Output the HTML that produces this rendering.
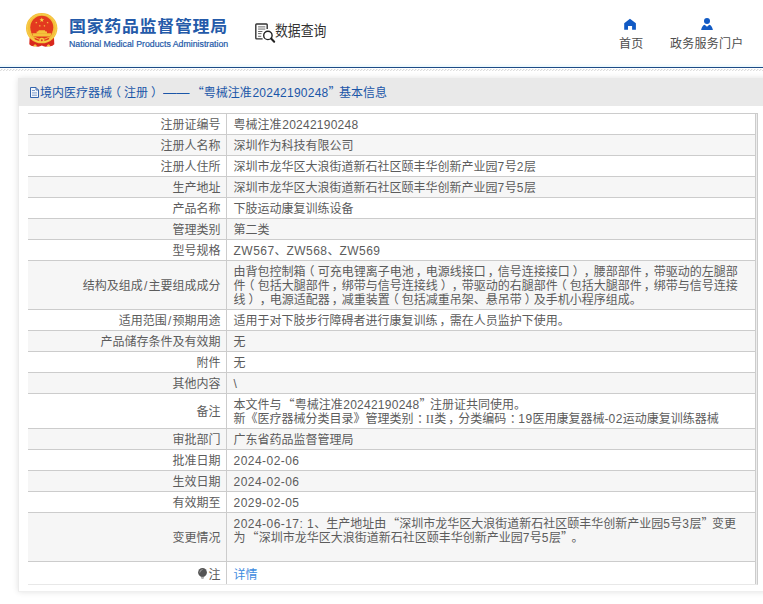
<!DOCTYPE html>
<html lang="zh-CN">
<head>
<meta charset="utf-8">
<title>国家药品监督管理局 数据查询</title>
<style>
html,body{margin:0;padding:0;}
body{width:763px;height:604px;overflow:hidden;background:#fff;position:relative;
  font-family:"Liberation Sans","Noto Sans CJK SC",sans-serif;font-size:12px;color:#555;text-spacing-trim:space-all;}
.abs{position:absolute;}
#hdr{position:absolute;left:0;top:0;width:763px;height:72px;background:#fff;}
#logo{position:absolute;left:24px;top:11px;width:36px;height:38px;}
#t1{position:absolute;left:69px;top:13px;font-size:16.3px;line-height:26px;font-weight:bold;color:#245aa9;white-space:nowrap;letter-spacing:0.69px;transform-origin:0 0;transform:scaleX(1.04);}
#t2{position:absolute;left:69px;top:38px;font-size:8.3px;line-height:12px;color:#245aa9;white-space:nowrap;transform-origin:0 0;transform:scaleX(1.056);-webkit-text-stroke:0.2px #245aa9;}
#sj{position:absolute;left:275px;top:21.5px;font-size:14.3px;line-height:18px;color:#333;white-space:nowrap;transform-origin:0 0;transform:scaleX(0.9);}
#sjico{position:absolute;left:254px;top:22px;width:22px;height:22px;}
.nav{position:absolute;top:37px;font-size:12px;line-height:14px;color:#4d4d4d;white-space:nowrap;letter-spacing:0.25px;}
#line1{position:absolute;left:0;top:64px;width:763px;height:3px;background:linear-gradient(to bottom,#fdfeff,#e9f8fd);}
#line2{position:absolute;left:0;top:67px;width:763px;height:1px;background:#1e4b86;}
#hatch{position:absolute;left:0;top:69px;width:763px;height:1px;
  background:repeating-linear-gradient(90deg,#fff 0,#fff 1px,#dadada 1px,#dadada 2px,#f0f0f0 2px,#f0f0f0 3px);}
#hatch2{position:absolute;left:0;top:70px;width:763px;height:1px;
  background:repeating-linear-gradient(90deg,#dedede 0,#dedede 1px,#f4f4f4 1px,#f4f4f4 2px,#fff 2px,#fff 3px);}
#panel{position:absolute;left:18px;top:78px;width:760px;height:514px;background:#fff;
  box-shadow:0 0 6px rgba(0,0,0,0.12);}
#ptitle{position:absolute;left:0;top:0;width:100%;height:28px;background:#e9e9e9;}
#ptxt{position:absolute;left:22px;top:7px;font-size:12px;line-height:16px;color:#1a56a8;white-space:nowrap;}
table{position:absolute;left:10px;top:35px;width:730px;border-collapse:separate;border-spacing:0;
  border-right:1px solid #ccc;border-top:1px solid #ccc;border-bottom:1px solid #e8e8e8;padding-right:1px;background:#ededed;table-layout:fixed;}
tr:first-child td{border-top:0;}
tr td{background:#fff;}
td{border-top:1px solid #ccc;padding:4px 7px 2px 6px;line-height:14px;font-size:12px;vertical-align:middle;color:#5c5c5c;}
td.l{width:186.5px;text-align:right;border-right:1px solid #ccc;padding-right:5.5px;}
td.v{border-right:1px solid #ccc;text-align:left;padding-left:6.6px;}
tr.g td{background:#f6f6f6;}
a{color:#3d8be0;text-decoration:none;}
tr.last td{padding-top:6px;padding-bottom:2px;}
.bulb{display:inline-block;width:9px;height:11px;vertical-align:0.3px;margin-right:1.2px;}
.q{font-family:"Noto Sans CJK SC",sans-serif;line-height:0;}
.ql{margin-left:1px;}
.qr{margin-right:-1.5px;}
.ro{font-family:"Liberation Serif",serif;line-height:0;letter-spacing:0.3px;}
.pl,.pr,.cm,.cl{position:relative;}
.pl{left:-3px;}
.pr{left:3px;}
.cm{left:2px;}
.cl{left:3.5px;}
.dash{display:inline-block;line-height:0;transform-origin:0 50%;transform:scaleX(1.1);}
.sl{padding:0 1.2px;}
.n{letter-spacing:0.45px;}
.m{letter-spacing:0.25px;margin-left:0.6px;}
</style>
</head>
<body>
<div id="hdr">
  <svg id="logo" viewBox="0 0 36 38">
    <path d="M5.6 27 L30 27 L30.3 33.2 Q28 36.2 24.5 35 Q21 36.6 17.8 34.6 Q14.6 36.6 11.1 35 Q7.6 36.2 5.3 33.2 Z" fill="#d8281d"/>
    <path d="M9.5 34.2 l1.6 -1 1.6 1 -0.4 1.4 -2.4 0z M22.9 34.2 l1.6 -1 1.6 1 -0.4 1.4 -2.4 0z" fill="#f3c23c"/>
    <ellipse cx="17.7" cy="17.2" rx="15.7" ry="15.1" fill="#f4bf3a"/>
    <ellipse cx="17.7" cy="17.2" rx="14.6" ry="14" fill="none" stroke="#f8d352" stroke-width="0.8"/>
    <circle cx="17.8" cy="16.3" r="11.5" fill="#e3391f"/>
    <path d="M7.2 21 H28.4 Q27.6 24 25.8 25.8 H9.8 Q8 24 7.2 21 Z" fill="#e3391f"/>
    <path d="M8.2 22.3 H27.4 L26.4 25.4 H9.2 Z" fill="#f4c33b"/>
    <path d="M12.6 22.4 V20.6 H14 L14.8 19.3 H20.8 L21.6 20.6 H23 V22.4 Z" fill="#f4c33b"/>
    <path d="M10.2 26.6 Q17.8 31.2 25.4 26.6 L24.6 28.6 Q17.8 32.2 11 28.6 Z" fill="#e3391f"/>
    <circle cx="17.8" cy="29.3" r="2.5" fill="#f6c840"/>
    <circle cx="17.8" cy="29.3" r="1" fill="#e3391f"/>
    <polygon points="17.80,6.50 18.42,8.15 20.18,8.23 18.80,9.32 19.27,11.02 17.80,10.05 16.33,11.02 16.80,9.32 15.42,8.23 17.18,8.15" fill="#f8d648"/><polygon points="12.85,10.75 12.72,11.51 13.38,11.93 12.61,12.04 12.41,12.79 12.07,12.10 11.30,12.15 11.85,11.60 11.56,10.88 12.25,11.24" fill="#f8d648"/><polygon points="23.05,10.75 23.65,11.24 24.34,10.88 24.05,11.60 24.60,12.15 23.83,12.10 23.49,12.79 23.29,12.04 22.52,11.93 23.18,11.51" fill="#f8d648"/><polygon points="15.99,13.82 16.13,14.58 16.89,14.75 16.21,15.12 16.28,15.89 15.72,15.35 15.01,15.66 15.34,14.96 14.83,14.38 15.60,14.48" fill="#f8d648"/><polygon points="20.21,13.82 20.60,14.48 21.37,14.38 20.86,14.96 21.19,15.66 20.48,15.35 19.92,15.89 19.99,15.12 19.31,14.75 20.07,14.58" fill="#f8d648"/>
  </svg>
  <div id="t1">国家药品监督管理局</div>
  <div id="t2">National Medical Products Administration</div>
  <svg id="sjico" viewBox="0 0 22 22">
    <path d="M13.2 6.9 V2.8 Q13.2 2 12.4 2 H2.6 Q1.8 2 1.8 2.8 V16.1 Q1.8 16.9 2.6 16.9 H8.6" fill="none" stroke="#333" stroke-width="1.4"/>
    <path d="M4.1 4.6 H11.3 M4.1 6 H11.3 M4.1 7.3 H11.3" stroke="#777" stroke-width="0.75"/>
    <path d="M4.1 9.5 H8.4 M4.1 11.6 H7.5 M4.1 14.3 H7.2" stroke="#666" stroke-width="1"/>
    <circle cx="13.9" cy="13.4" r="4.2" fill="#fff" stroke="#222" stroke-width="1.4"/>
    <path d="M17.1 16.5 L20.2 19.8" stroke="#222" stroke-width="2" stroke-linecap="round"/>
  </svg>
  <div id="sj">数据查询</div>
  <svg class="abs" style="left:624px;top:18px;width:12px;height:12px" viewBox="0 0 12 12">
    <path d="M5.95 0.8 L0.2 5.2 V11.8 H4 V8 H8.1 V11.8 H11.9 V5.2 Z" fill="#115ac4"/>
  </svg>
  <div class="nav" style="left:619px;">首页</div>
  <svg class="abs" style="left:701px;top:18px;width:12px;height:12px" viewBox="0 0 12 12">
    <circle cx="6" cy="3.1" r="3" fill="#115ac4"/>
    <path d="M0.1 11.9 Q1 7.6 3.7 6.8 L6 8.7 L8.3 6.8 Q11 7.6 11.9 11.9 Z" fill="#115ac4"/>
  </svg>
  <div class="nav" style="left:670px;">政务服务门户</div>
  <div id="line1"></div><div id="line2"></div><div id="hatch"></div><div id="hatch2"></div>
</div>

<div id="panel">
  <div class="abs" style="left:0;top:28px;width:1px;height:486px;background:#ececec"></div><div class="abs" style="left:0;top:513px;width:100%;height:1px;background:#efefef"></div>
  <div id="ptitle">
    <svg class="abs" style="left:12px;top:9px;width:9px;height:11px" viewBox="0 0 9 11">
      <path d="M0.5 0.5 H6 L8.5 3 V10.5 H0.5 Z" fill="#f4f7fb" stroke="#3465ad" stroke-width="1"/>
      <path d="M6 0.5 V3 H8.5" fill="none" stroke="#3465ad" stroke-width="0.9"/>
      <path d="M2 3.5 H5 M2 5.9 H7 M2 8.2 H7" stroke="#7c9ccc" stroke-width="1"/>
    </svg>
    <div id="ptxt">境内医疗器械<span class="pl">（</span>注册<span class="pr">）</span> <span class="dash">——</span> <span class="q ql">“</span>粤械注准<span class="m">20242190248</span><span class="q qr">”</span>基本信息</div>
  </div>
  <table>
    <tr><td class="l">注册证编号</td><td class="v">粤械注准<span class="m">20242190248</span></td></tr>
    <tr class="g"><td class="l">注册人名称</td><td class="v">深圳作为科技有限公司</td></tr>
    <tr><td class="l">注册人住所</td><td class="v">深圳市龙华区大浪街道新石社区颐丰华创新产业园<span class="n">7</span>号<span class="n">2</span>层</td></tr>
    <tr class="g"><td class="l">生产地址</td><td class="v">深圳市龙华区大浪街道新石社区颐丰华创新产业园<span class="n">7</span>号<span class="n">5</span>层</td></tr>
    <tr><td class="l">产品名称</td><td class="v">下肢运动康复训练设备</td></tr>
    <tr class="g"><td class="l">管理类别</td><td class="v">第二类</td></tr>
    <tr><td class="l">型号规格</td><td class="v"><span class="n">ZW567</span>、<span class="n">ZW568</span>、<span class="n">ZW569</span></td></tr>
    <tr class="g"><td class="l">结构及组成<span class="sl">/</span>主要组成成分</td><td class="v">由背包控制箱<span class="pl">（</span>可充电锂离子电池<span class="cm">，</span>电源线接口<span class="cm">，</span>信号连接接口<span class="pr">）</span><span class="cm">，</span>腰部部件<span class="cm">，</span>带驱动的左腿部<br>件<span class="pl">（</span>包括大腿部件<span class="cm">，</span>绑带与信号连接线<span class="pr">）</span><span class="cm">，</span>带驱动的右腿部件<span class="pl">（</span>包括大腿部件<span class="cm">，</span>绑带与信号连接<br>线<span class="pr">）</span><span class="cm">，</span>电源适配器<span class="cm">，</span>减重装置<span class="pl">（</span>包括减重吊架、悬吊带<span class="pr">）</span>及手机小程序组成。</td></tr>
    <tr><td class="l">适用范围<span class="sl">/</span>预期用途</td><td class="v">适用于对下肢步行障碍者进行康复训练<span class="cm">，</span>需在人员监护下使用。</td></tr>
    <tr class="g"><td class="l">产品储存条件及有效期</td><td class="v">无</td></tr>
    <tr><td class="l">附件</td><td class="v">无</td></tr>
    <tr class="g"><td class="l">其他内容</td><td class="v">\</td></tr>
    <tr><td class="l">备注</td><td class="v">本文件与<span class="q ql">“</span>粤械注准<span class="m">20242190248</span><span class="q qr">”</span>注册证共同使用。<br>新《医疗器械分类目录》管理类别<span class="cl">：</span><span class="ro">II</span>类<span class="cm">，</span>分类编码<span class="cl">：</span><span class="n">19</span>医用康复器械-<span class="n">02</span>运动康复训练器械</td></tr>
    <tr class="g"><td class="l">审批部门</td><td class="v">广东省药品监督管理局</td></tr>
    <tr><td class="l">批准日期</td><td class="v"><span class="n">2024-02-06</span></td></tr>
    <tr class="g"><td class="l">生效日期</td><td class="v"><span class="n">2024-02-06</span></td></tr>
    <tr><td class="l">有效期至</td><td class="v"><span class="n">2029-02-05</span></td></tr>
    <tr class="g"><td class="l">变更情况</td><td class="v"><span class="n">2024-06-17: 1</span>、生产地址由<span class="q ql">“</span>深圳市龙华区大浪街道新石社区颐丰华创新产业园<span class="n">5</span>号<span class="n">3</span>层<span class="q qr">”</span>变更<br>为<span class="q ql">“</span>深圳市龙华区大浪街道新石社区颐丰华创新产业园<span class="n">7</span>号<span class="n">5</span>层<span class="q qr">”</span>。<br>&nbsp;</td></tr>
    <tr class="last"><td class="l"><svg class="bulb" viewBox="0 0 9 11"><circle cx="4.5" cy="4.4" r="4.4" fill="#555"/><path d="M2.6 7.6 H6.4 V8.6 H2.6 Z" fill="#555"/><path d="M3 9.4 H6 V10 Q4.5 11.2 3 10 Z" fill="#666"/><path d="M1.8 4.2 Q2 2 4.2 1.6" fill="none" stroke="#aaa" stroke-width="0.9" stroke-linecap="round"/></svg>注</td><td class="v"><a>详情</a></td></tr>
  </table>
</div>
</body>
</html>
